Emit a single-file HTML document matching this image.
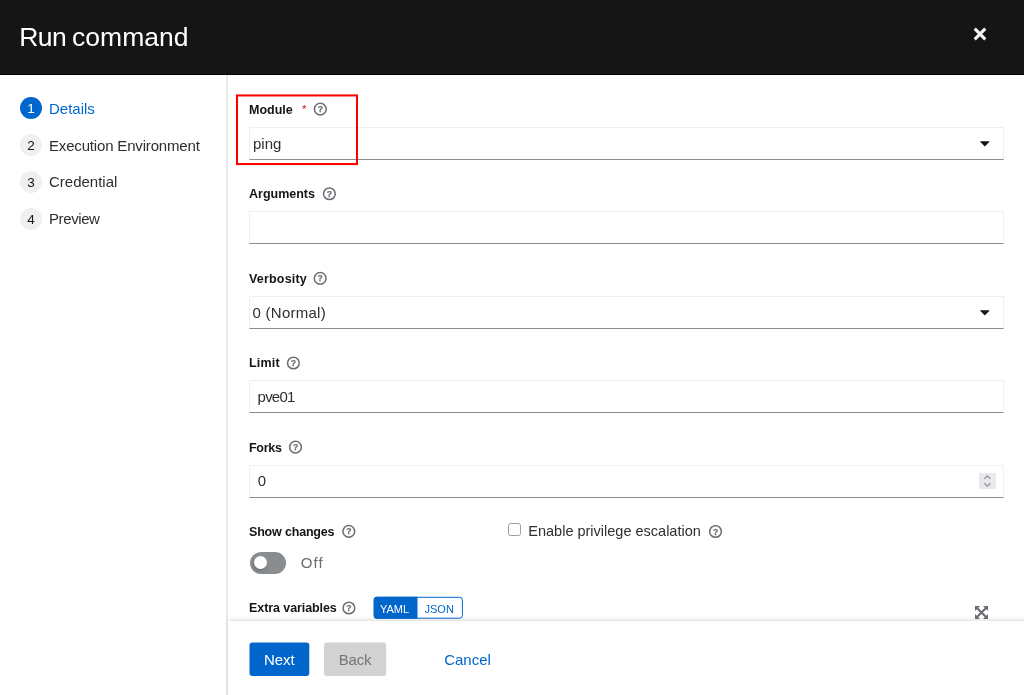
<!DOCTYPE html>
<html lang="en">
<head>
<meta charset="utf-8">
<title>Run command</title>
<style>
*{box-sizing:border-box;margin:0;padding:0}
html,body{width:1024px;height:695px;overflow:hidden;background:#fff}
body{font-family:"Liberation Sans",sans-serif;color:#151515;position:relative;will-change:transform}
.abs{position:absolute;white-space:nowrap;line-height:1}
#hdr{position:absolute;left:0;top:0;width:1024px;height:75px;background:#151515;border-bottom:1px solid #030303}
#title{font-weight:normal;left:19.2px;top:24.4px;font-size:26.5px;color:#fff;letter-spacing:0;word-spacing:-1.6px}#title b{font-weight:normal;letter-spacing:-.5px}
#navline{position:absolute;left:226px;top:75px;width:2px;height:620px;background:#e8e8e8}
.num{position:absolute;left:20px;width:22px;height:22px;border-radius:50%;background:#f0f0f0;color:#151515;font-size:13.5px;text-align:center;line-height:23px}
.num.cur{background:#06c;color:#fff}
.nav{left:49px;font-size:15px;color:#2e2e2e}
.nav.cur{color:#06c}
.lbl{left:249px;font-size:12.5px;font-weight:bold;color:#151515}
.inp{position:absolute;left:249px;width:755px;height:33px;border:1px solid #f0f0f0;border-bottom:1px solid #8a8d90;background:#fff}
.val{font-size:15px;color:#2e2e2e}
.help{position:absolute;width:14px;height:14px;overflow:visible}
.help circle{fill:none;stroke:#6a6e73;stroke-width:1.5}
.help text{stroke:#6a6e73;stroke-width:.25px;font-family:"Liberation Sans",sans-serif;font-size:8.6px;font-weight:bold;fill:#6a6e73;text-anchor:middle}
.btn{border:0;background:none;font-family:inherit;padding:0;display:block;position:absolute;top:642.7px;height:33px;border-radius:3px;font-size:15px;text-align:center;line-height:33px}
.ico{position:absolute;overflow:visible}
</style>
</head>
<body>
<div id="hdr"></div>
<h1 id="title" class="abs"><b>Run</b> command</h1>
<svg class="ico" style="left:973px;top:27px" width="14" height="14" viewBox="0 0 14 14"><path d="M1.7 1.7 L12.3 12.3 M12.3 1.7 L1.7 12.3" stroke="#f5f5f5" stroke-width="3.1" fill="none"/></svg>
<div id="navline"></div>

<nav>
<div class="num cur" style="top:97.3px">1</div><div class="abs nav cur" style="top:101px">Details</div>
<div class="num" style="top:134px">2</div><div class="abs nav" style="top:138px;letter-spacing:-.17px">Execution Environment</div>
<div class="num" style="top:171px">3</div><div class="abs nav" style="top:174px">Credential</div>
<div class="num" style="top:207.5px">4</div><div class="abs nav" style="top:211px;letter-spacing:-.4px">Preview</div>
</nav>

<main>
<svg id="redbox" class="ico" style="left:230px;top:90px;z-index:5" width="140" height="80" viewBox="0 0 140 80"><rect x="7" y="5.45" width="120" height="68.6" fill="none" stroke="#f00" stroke-width="2.05"/></svg>

<label class="abs lbl" style="top:103.5px">Module</label>
<div class="abs" style="left:302px;top:104.2px;font-size:11.5px;color:#c9190b">*</div>
<svg class="help" style="left:313px;top:102px" viewBox="0 0 14 14"><g transform="translate(0.3 0.2)"><circle cx="7" cy="7" r="5.85"/><text x="7" y="10">?</text></g></svg>
<div class="inp" style="top:127px"></div><div class="abs val" style="left:253px;top:136px">ping</div>
<svg class="ico" style="left:980px;top:141px" width="10" height="6" viewBox="0 0 10 6"><path d="M0.6 0.2 H9.0 Q9.8 0.4 9.2 1.1 L5.3 5.1 Q4.8 5.5 4.3 5.1 L0.4 1.1 Q-0.2 0.4 0.6 0.2 Z" fill="#151515"/></svg>

<label class="abs lbl" style="top:187.5px">Arguments</label>
<svg class="help" style="left:322px;top:186px" viewBox="0 0 14 14"><g transform="translate(0.4 0.75)"><circle cx="7" cy="7" r="5.85"/><text x="7" y="10">?</text></g></svg>
<div class="inp" style="top:211px"></div>

<label class="abs lbl" style="top:272.5px;letter-spacing:.18px">Verbosity</label>
<svg class="help" style="left:313px;top:271px" viewBox="0 0 14 14"><g transform="translate(0.2 0.4)"><circle cx="7" cy="7" r="5.85"/><text x="7" y="10">?</text></g></svg>
<div class="inp" style="top:296px"></div><div class="abs val" style="left:252.6px;top:305px;letter-spacing:.25px">0 (Normal)</div>
<svg class="ico" style="left:980px;top:310px" width="10" height="6" viewBox="0 0 10 6"><path d="M0.6 0.2 H9.0 Q9.8 0.4 9.2 1.1 L5.3 5.1 Q4.8 5.5 4.3 5.1 L0.4 1.1 Q-0.2 0.4 0.6 0.2 Z" fill="#151515"/></svg>

<label class="abs lbl" style="top:357px;letter-spacing:.2px">Limit</label>
<svg class="help" style="left:286px;top:356px" viewBox="0 0 14 14"><g transform="translate(0.4 0.0)"><circle cx="7" cy="7" r="5.85"/><text x="7" y="10">?</text></g></svg>
<div class="inp" style="top:380px"></div><div class="abs val" style="left:257.6px;top:388.6px;letter-spacing:-.8px">pve01</div>

<label class="abs lbl" style="top:441.5px;letter-spacing:-.3px">Forks</label>
<svg class="help" style="left:288px;top:440px" viewBox="0 0 14 14"><g transform="translate(0.5 0.2)"><circle cx="7" cy="7" r="5.85"/><text x="7" y="10">?</text></g></svg>
<div class="inp" style="top:465px"></div><div class="abs val" style="left:257.7px;top:473.3px">0</div>
<div style="position:absolute;left:979px;top:473px;width:17px;height:16px;background:#e9e9ed"></div>
<svg class="ico" style="left:979px;top:473px" width="17" height="16" viewBox="0 0 17 16"><path d="M5.3 5.7 L8.3 2.8 L11.3 5.7 M5.3 10.3 L8.3 13.2 L11.3 10.3" stroke="#8f8f9d" stroke-width="1.3" fill="none"/></svg>

<label class="abs lbl" style="top:525.7px;letter-spacing:-.18px">Show changes</label>
<svg class="help" style="left:341px;top:524px" viewBox="0 0 14 14"><g transform="translate(0.8 0.4)"><circle cx="7" cy="7" r="5.85"/><text x="7" y="10">?</text></g></svg>
<div style="position:absolute;left:249.6px;top:551.9px;width:36.8px;height:22px;border-radius:11px;background:#8a8d90"></div>
<div style="position:absolute;left:253.6px;top:556.1px;width:13.4px;height:13.4px;border-radius:50%;background:#fff;box-shadow:-1px 2px 3px rgba(3,3,3,.18)"></div>
<div class="abs" style="left:300.8px;top:554.8px;font-size:15px;color:#6a6e73;letter-spacing:1.1px">Off</div>

<div style="position:absolute;left:508px;top:523.3px;width:13px;height:13px;border:1px solid #9c9cad;border-radius:2.5px;background:#fff"></div>
<div class="abs" style="left:528.3px;top:524px;font-size:14.5px;color:#2e2e2e">Enable privilege escalation</div>
<svg class="help" style="left:708px;top:524px" viewBox="0 0 14 14"><g transform="translate(0.5 0.5)"><circle cx="7" cy="7" r="5.85"/><text x="7" y="10">?</text></g></svg>

<label class="abs lbl" style="top:602px;letter-spacing:-.08px">Extra variables</label>
<svg class="help" style="left:341px;top:601px" viewBox="0 0 14 14"><g transform="translate(0.9 0.0)"><circle cx="7" cy="7" r="5.85"/><text x="7" y="10">?</text></g></svg>
<svg class="ico" style="left:370px;top:590px" width="100" height="35" viewBox="0 0 100 35"><rect x="4.2" y="7.3" width="88.2" height="20.9" rx="2.6" fill="#fff" stroke="#06c" stroke-width="1"/><path d="M6.7 6.8 H47.5 V28.7 H6.7 Q3.7 28.7 3.7 25.7 V9.8 Q3.7 6.8 6.7 6.8 Z" fill="#06c"/></svg>
<div class="abs" style="left:380px;top:603.6px;font-size:11px;color:#fff">YAML</div>
<div class="abs" style="left:424.5px;top:603.6px;font-size:11px;color:#06c">JSON</div>
<svg class="ico" style="left:975px;top:606px" width="13" height="13" viewBox="0 0 13 13"><path d="M2 2 L11 11 M11 2 L2 11" stroke="#6a6e73" stroke-width="2.1" fill="none"/><path d="M0 0 H5 L0 5 Z M13 0 V5 L8 0 Z M0 13 V8 L5 13 Z M13 13 H8 L13 8 Z" fill="#6a6e73"/></svg>

</main>
<footer>
<div style="position:absolute;left:228px;top:621px;width:820px;height:80px;background:#fff;box-shadow:0 -2px 4px -1px rgba(3,3,3,.16)"></div>
<svg class="ico" style="left:240px;top:636px" width="160" height="50" viewBox="0 0 160 50"><rect x="9.5" y="6.6" width="59.8" height="33.3" rx="3" fill="#06c"/><rect x="84" y="6.6" width="62.2" height="33.3" rx="3" fill="#d2d2d2"/></svg>
<button type="button" class="btn" style="left:249.5px;width:59.6px;color:#fff"><span>Next</span></button>
<button type="button" class="btn" style="left:324px;width:62.2px;color:#72767a;letter-spacing:-.15px"><span>Back</span></button>
<button type="button" class="btn" style="left:430px;width:75px;color:#06c"><span>Cancel</span></button>
</footer>
</body>
</html>
